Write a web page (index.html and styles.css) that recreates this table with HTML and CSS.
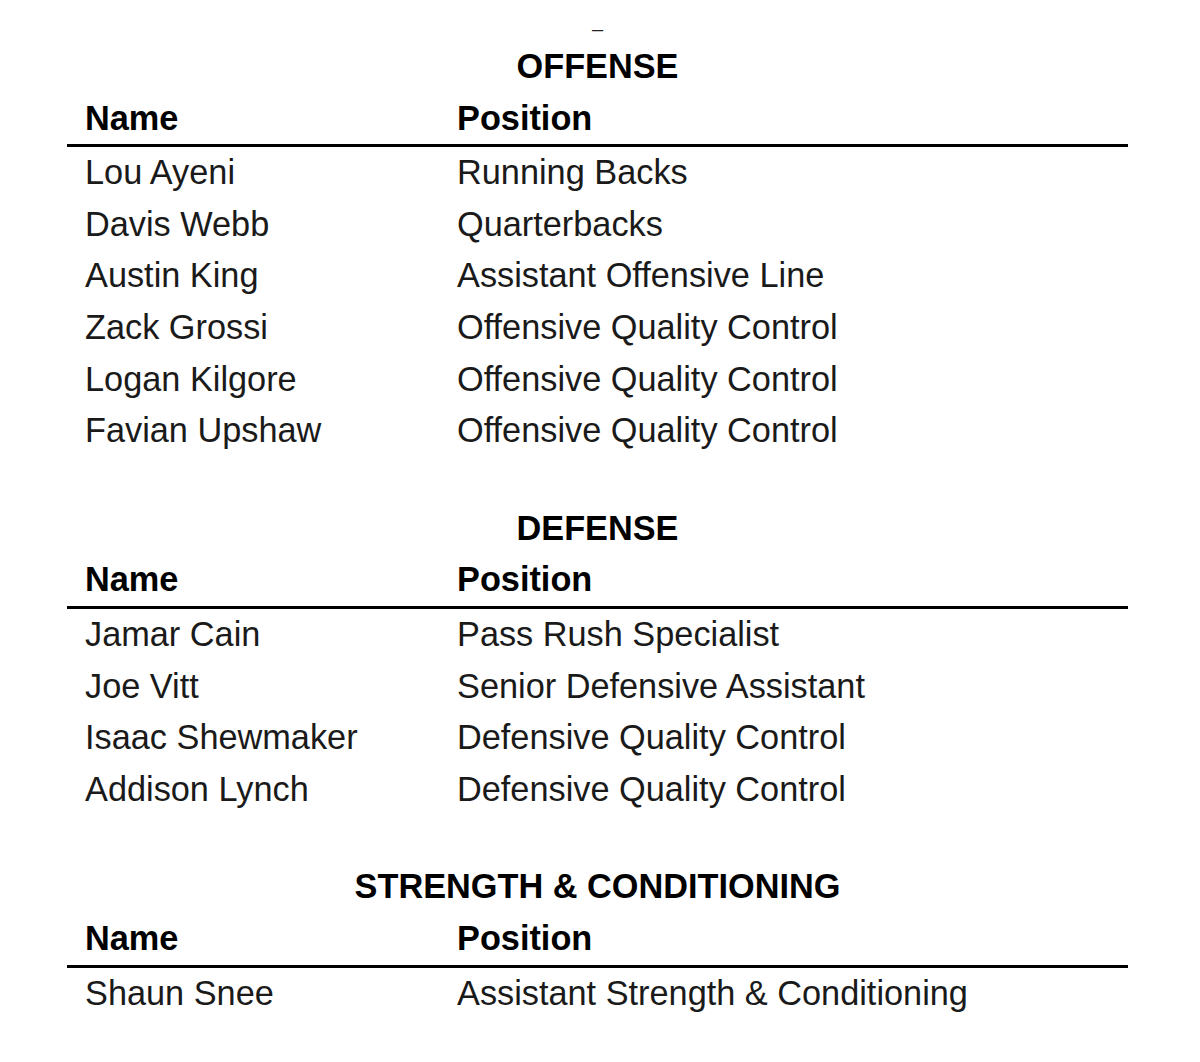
FILE: index.html
```html
<!DOCTYPE html>
<html lang="en">
<head>
<meta charset="utf-8">
<title>Coaching Staff</title>
<link rel="stylesheet" href="styles.css">
</head>
<body>
<main class="roster">
  <p class="dash">–</p>

  <section class="group">
    <h2 class="group-title">OFFENSE</h2>
    <div class="staff-table">
      <div class="row head"><span>Name</span><span>Position</span></div>
      <div class="row"><span>Lou Ayeni</span><span>Running Backs</span></div>
      <div class="row"><span>Davis Webb</span><span>Quarterbacks</span></div>
      <div class="row"><span>Austin King</span><span>Assistant Offensive Line</span></div>
      <div class="row"><span>Zack Grossi</span><span>Offensive Quality Control</span></div>
      <div class="row"><span>Logan Kilgore</span><span>Offensive Quality Control</span></div>
      <div class="row"><span>Favian Upshaw</span><span>Offensive Quality Control</span></div>
    </div>
  </section>

  <section class="group">
    <h2 class="group-title">DEFENSE</h2>
    <div class="staff-table">
      <div class="row head"><span>Name</span><span>Position</span></div>
      <div class="row"><span>Jamar Cain</span><span>Pass Rush Specialist</span></div>
      <div class="row"><span>Joe Vitt</span><span>Senior Defensive Assistant</span></div>
      <div class="row"><span>Isaac Shewmaker</span><span>Defensive Quality Control</span></div>
      <div class="row"><span>Addison Lynch</span><span>Defensive Quality Control</span></div>
    </div>
  </section>

  <section class="group">
    <h2 class="group-title">STRENGTH &amp; CONDITIONING</h2>
    <div class="staff-table">
      <div class="row head"><span>Name</span><span>Position</span></div>
      <div class="row"><span>Shaun Snee</span><span>Assistant Strength &amp; Conditioning</span></div>
    </div>
  </section>
</main>
</body>
</html>
```

FILE: styles.css
```css
html, body {
  margin: 0;
  padding: 0;
  background: #ffffff;
}

body {
  font-family: "Liberation Sans", Arial, sans-serif;
  color: #1a1a1a;
}

.roster {
  width: 1061px;
  margin-left: 67px;
  display: flex;
  flex-direction: column;
  gap: 46px;
}

.dash {
  margin: 0 0 -46px 0;
  height: 41px;
  padding-top: 17px;
  box-sizing: border-box;
  font-size: 20px;
  line-height: 24px;
  text-align: center;
  color: #222;
}

.group {
  display: flex;
  flex-direction: column;
}

.group-title {
  margin: 0;
  font-size: 34.3px;
  line-height: 51.6px;
  font-weight: bold;
  text-align: center;
  color: #000;
}

.staff-table {
  display: flex;
  flex-direction: column;
}

.row {
  display: grid;
  grid-template-columns: 372px 1fr;
  height: 51.6px;
  font-size: 34.3px;
  line-height: 51.6px;
  white-space: nowrap;
}

.row span {
  padding-left: 18px;
}

.row.head {
  font-weight: bold;
  color: #000;
  border-bottom: 3px solid #000;
}
```
